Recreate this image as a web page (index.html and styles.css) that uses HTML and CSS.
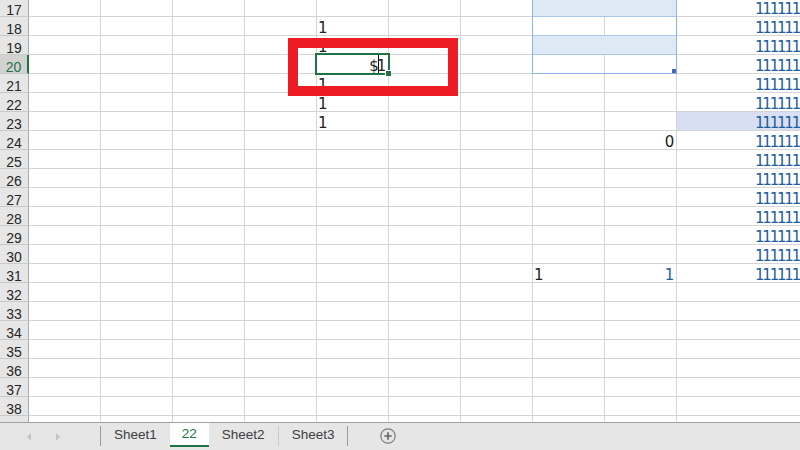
FILE: index.html
```html
<!DOCTYPE html>
<html>
<head>
<meta charset="utf-8">
<link rel="stylesheet" href="styles.css">
</head>
<body>
<div class="app">
  <div class="grid">
    <div class="rows">
      <div class="row"><div class="rh">17</div><div class="c"></div><div class="c"></div><div class="c"></div><div class="c"></div><div class="c"></div><div class="c"></div><div class="c"></div><div class="c m hs"></div><div class="c j">1111111111</div></div>
      <div class="row"><div class="rh">18</div><div class="c"></div><div class="c"></div><div class="c"></div><div class="c"></div><div class="c v">1</div><div class="c"></div><div class="c"></div><div class="c hs"></div><div class="c hs"></div><div class="c j">1111111111</div></div>
      <div class="row"><div class="rh">19</div><div class="c"></div><div class="c"></div><div class="c"></div><div class="c"></div><div class="c v">1</div><div class="c"></div><div class="c"></div><div class="c m hs"></div><div class="c j">1111111111</div></div>
      <div class="row"><div class="rh cur">20</div><div class="c"></div><div class="c"></div><div class="c"></div><div class="c"></div><div class="c v r">$1</div><div class="c"></div><div class="c"></div><div class="c hs"></div><div class="c hs"></div><div class="c j">1111111111</div></div>
      <div class="row"><div class="rh">21</div><div class="c"></div><div class="c"></div><div class="c"></div><div class="c"></div><div class="c v">1</div><div class="c"></div><div class="c"></div><div class="c"></div><div class="c"></div><div class="c j">1111111111</div></div>
      <div class="row"><div class="rh">22</div><div class="c"></div><div class="c"></div><div class="c"></div><div class="c"></div><div class="c v">1</div><div class="c"></div><div class="c"></div><div class="c"></div><div class="c"></div><div class="c j">1111111111</div></div>
      <div class="row"><div class="rh">23</div><div class="c"></div><div class="c"></div><div class="c"></div><div class="c"></div><div class="c v">1</div><div class="c"></div><div class="c"></div><div class="c"></div><div class="c"></div><div class="c j hl">1111111111</div></div>
      <div class="row"><div class="rh">24</div><div class="c"></div><div class="c"></div><div class="c"></div><div class="c"></div><div class="c"></div><div class="c"></div><div class="c"></div><div class="c"></div><div class="c v r">0</div><div class="c j">1111111111</div></div>
      <div class="row"><div class="rh">25</div><div class="c"></div><div class="c"></div><div class="c"></div><div class="c"></div><div class="c"></div><div class="c"></div><div class="c"></div><div class="c"></div><div class="c"></div><div class="c j">1111111111</div></div>
      <div class="row"><div class="rh">26</div><div class="c"></div><div class="c"></div><div class="c"></div><div class="c"></div><div class="c"></div><div class="c"></div><div class="c"></div><div class="c"></div><div class="c"></div><div class="c j">1111111111</div></div>
      <div class="row"><div class="rh">27</div><div class="c"></div><div class="c"></div><div class="c"></div><div class="c"></div><div class="c"></div><div class="c"></div><div class="c"></div><div class="c"></div><div class="c"></div><div class="c j">1111111111</div></div>
      <div class="row"><div class="rh">28</div><div class="c"></div><div class="c"></div><div class="c"></div><div class="c"></div><div class="c"></div><div class="c"></div><div class="c"></div><div class="c"></div><div class="c"></div><div class="c j">1111111111</div></div>
      <div class="row"><div class="rh">29</div><div class="c"></div><div class="c"></div><div class="c"></div><div class="c"></div><div class="c"></div><div class="c"></div><div class="c"></div><div class="c"></div><div class="c"></div><div class="c j">1111111111</div></div>
      <div class="row"><div class="rh">30</div><div class="c"></div><div class="c"></div><div class="c"></div><div class="c"></div><div class="c"></div><div class="c"></div><div class="c"></div><div class="c"></div><div class="c"></div><div class="c j">1111111111</div></div>
      <div class="row"><div class="rh">31</div><div class="c"></div><div class="c"></div><div class="c"></div><div class="c"></div><div class="c"></div><div class="c"></div><div class="c"></div><div class="c v">1</div><div class="c b r">1</div><div class="c j">1111111111</div></div>
      <div class="row"><div class="rh">32</div><div class="c"></div><div class="c"></div><div class="c"></div><div class="c"></div><div class="c"></div><div class="c"></div><div class="c"></div><div class="c"></div><div class="c"></div><div class="c j"></div></div>
      <div class="row"><div class="rh">33</div><div class="c"></div><div class="c"></div><div class="c"></div><div class="c"></div><div class="c"></div><div class="c"></div><div class="c"></div><div class="c"></div><div class="c"></div><div class="c j"></div></div>
      <div class="row"><div class="rh">34</div><div class="c"></div><div class="c"></div><div class="c"></div><div class="c"></div><div class="c"></div><div class="c"></div><div class="c"></div><div class="c"></div><div class="c"></div><div class="c j"></div></div>
      <div class="row"><div class="rh">35</div><div class="c"></div><div class="c"></div><div class="c"></div><div class="c"></div><div class="c"></div><div class="c"></div><div class="c"></div><div class="c"></div><div class="c"></div><div class="c j"></div></div>
      <div class="row"><div class="rh">36</div><div class="c"></div><div class="c"></div><div class="c"></div><div class="c"></div><div class="c"></div><div class="c"></div><div class="c"></div><div class="c"></div><div class="c"></div><div class="c j"></div></div>
      <div class="row"><div class="rh">37</div><div class="c"></div><div class="c"></div><div class="c"></div><div class="c"></div><div class="c"></div><div class="c"></div><div class="c"></div><div class="c"></div><div class="c"></div><div class="c j"></div></div>
      <div class="row"><div class="rh">38</div><div class="c"></div><div class="c"></div><div class="c"></div><div class="c"></div><div class="c"></div><div class="c"></div><div class="c"></div><div class="c"></div><div class="c"></div><div class="c j"></div></div>
      <div class="row"><div class="rh">39</div><div class="c"></div><div class="c"></div><div class="c"></div><div class="c"></div><div class="c"></div><div class="c"></div><div class="c"></div><div class="c"></div><div class="c"></div><div class="c j"></div></div>
    </div>
    <div class="range"><span class="range-handle"></span></div>
    <div class="sel"><span class="sel-handle"></span></div>
    <div class="caret"></div>
    <div class="redbox"></div>
  </div>
  <div class="tabs">
    <div class="nav"><span class="arr left"></span><span class="arr right"></span></div>
    <div class="sep"></div>
    <div class="tab">Sheet1</div>
    <div class="tab active">22</div>
    <div class="tab">Sheet2</div>
    <div class="sep light"></div>
    <div class="tab">Sheet3</div>
    <div class="sep"></div>
    <div class="add">
      <svg width="16" height="16" viewBox="0 0 16 16"><circle cx="8" cy="8" r="7.2" fill="none" stroke="#7b7b7b" stroke-width="1.2"/><path d="M8 4.3v7.4M4.3 8h7.4" stroke="#666" stroke-width="1.7"/></svg>
    </div>
  </div>
</div>
</body>
</html>
```
FILE: styles.css
```css
html, body {
  margin: 0;
  padding: 0;
}
body {
  width: 800px;
  height: 450px;
  overflow: hidden;
  background: #fff;
  font-family: "Liberation Sans", Arial, sans-serif;
}
.app {
  display: flex;
  flex-direction: column;
  height: 450px;
}
.grid {
  position: relative;
  height: 422px;
  overflow: hidden;
  flex: none;
}
.rows {
  margin-top: -2px;
}
.row {
  display: flex;
  height: 19px;
}
.rh {
  flex: none;
  width: 29px;
  box-sizing: border-box;
  background: #e6e6e6;
  border-right: 1px solid #a9a9a9;
  border-bottom: 1px solid #c9c9c9;
  font-size: 14px;
  line-height: 18px;
  padding-top: 3px;
  color: #262626;
  text-align: center;
  overflow: hidden;
}
.rh.cur {
  background: #d2d2d2;
  color: #217346;
  border-right: 2px solid #217346;
}
.c {
  flex: none;
  width: 72px;
  box-sizing: border-box;
  border-right: 1px solid #d4d4d4;
  border-bottom: 1px solid #d4d4d4;
  font-family: "DejaVu Sans", sans-serif;
  font-size: 15px;
  letter-spacing: -2.2px;
  line-height: 18px;
  padding: 2px 3px 0 1px;
  white-space: nowrap;
  overflow: hidden;
}
.c.m {
  width: 144px;
  background: #dde9f5;
}
.c.hs {
  border-bottom-color: #a9c7ea;
}
.c.v {
  color: #222;
}
.c.b {
  color: #1f5d9c;
}
.c.r {
  text-align: right;
  padding-right: 4px;
}
.c.j {
  flex: 1;
  border-right: 0;
  padding-left: 78px;
  color: #1f5d9c;
}
.c.hl {
  background: #d9dff3;
}
.range {
  position: absolute;
  left: 532px;
  top: -4px;
  width: 145px;
  height: 78px;
  box-sizing: border-box;
  border: 1px solid #8bb5e7;
}
.range-handle {
  position: absolute;
  right: 0;
  bottom: 0;
  width: 4px;
  height: 4px;
  background: #4466c4;
}
.sel {
  position: absolute;
  left: 315px;
  top: 53px;
  width: 75px;
  height: 22px;
  box-sizing: border-box;
  border: 2px solid #217346;
}
.sel-handle {
  position: absolute;
  right: -3px;
  bottom: -3px;
  width: 5px;
  height: 5px;
  background: #217346;
  border-left: 1px solid #fff;
  border-top: 1px solid #fff;
}
.caret {
  position: absolute;
  left: 378px;
  top: 55px;
  width: 1px;
  height: 18px;
  background: #111;
}
.redbox {
  position: absolute;
  left: 288px;
  top: 38px;
  width: 170px;
  height: 58px;
  box-sizing: border-box;
  border: 10px solid #ed1c24;
}
.tabs {
  flex: none;
  height: 28px;
  box-sizing: border-box;
  border-top: 1px solid #a0a0a0;
  background: #e6e6e6;
  display: flex;
  align-items: flex-start;
}
.nav {
  width: 100px;
  height: 27px;
  display: flex;
  align-items: center;
}
.arr {
  width: 0;
  height: 0;
  border-top: 4px solid transparent;
  border-bottom: 4px solid transparent;
}
.arr.left {
  margin-left: 27px;
  border-right: 4px solid #c4c4c4;
}
.arr.right {
  margin-left: 25px;
  border-left: 4px solid #c4c4c4;
}
.sep {
  width: 1px;
  height: 20px;
  margin-top: 3px;
  background: #9c9c9c;
}
.sep.light {
  background: #c8c8c8;
}
.tab {
  padding: 0 13px;
  font-size: 13.5px;
  line-height: 24px;
  color: #404040;
}
.tab.active {
  background: #fff;
  color: #217346;
  line-height: 22px;
  border-bottom: 2px solid #217346;
  padding: 0 12px;
}
.add {
  margin-left: 32px;
  margin-top: 5px;
  width: 16px;
  height: 16px;
}
.add svg {
  display: block;
}
```
